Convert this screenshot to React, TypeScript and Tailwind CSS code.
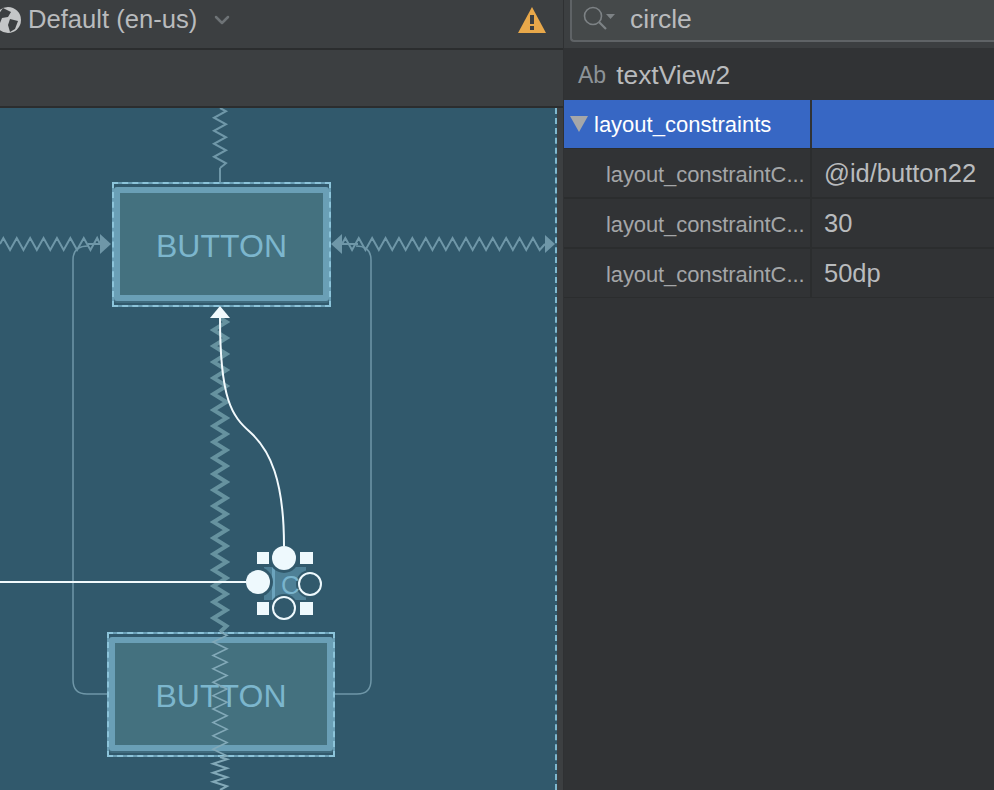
import { ChevronDown } from 'lucide-react';

const font = { fontFamily: '"Liberation Sans", Arial, sans-serif' };

// zigzag wire between two points on one axis
function zigV(x: number, y1: number, y2: number, step: number, amp: number) {
  let d = `M${x} ${y1}`;
  let side = 1;
  for (let y = y1 + step / 2; y < y2; y += step) {
    d += ` L${x + side * amp} ${y}`;
    side = -side;
  }
  return d + ` L${x} ${y2}`;
}

function zigH(y: number, x1: number, x2: number, step: number, amp: number) {
  let d = `M${x1} ${y}`;
  let side = -1;
  for (let x = x1 + step / 2; x < x2; x += step) {
    d += ` L${x} ${y + side * amp}`;
    side = -side;
  }
  return d + ` L${x2} ${y}`;
}

const rows = [
  { name: 'layout_constraintC...', value: '@id/button22' },
  { name: 'layout_constraintC...', value: '30' },
  { name: 'layout_constraintC...', value: '50dp' },
];

function CanvasButton({ className }: { className: string }) {
  return (
    <div className={`absolute border-2 border-dashed border-[#8cc4da] bg-[#6a9fb6] ${className}`}>
      <div className="h-full bg-[#31596c] pt-[3px]">
        <div className="h-[116px] rounded-[3px] bg-[#3f6b7e] pb-[2px]">
          <div className="flex h-[114px] items-center justify-center rounded-[3px] border-[6px] border-[#6a9fb6] bg-[#44717f] pt-[3px]">
            <span className="text-[32px] leading-none text-[#7cb6cd]">BUTTON</span>
          </div>
        </div>
      </div>
    </div>
  );
}

export default function App() {
  return (
    <div className="flex h-[790px] w-[994px] overflow-hidden bg-[#3c3f41]" style={font}>
      {/* Left: editor */}
      <div className="flex w-[564px] flex-col border-r border-[#2f3133]">
        <div className="flex h-[50px] shrink-0 items-center border-b-2 border-[#2b2d2e] pb-2">
          <svg width="28" height="28" viewBox="0 0 28 28" className="ml-[-6px] shrink-0">
            <circle cx="14" cy="14" r="13" fill="#c4c6c7" />
            <path d="M9 2 L17 6 L14 11 L8 12 L6 17 L1 13 Z M16 13 L24 15 L21 23 L16 26 L14 19 Z" fill="#3c3f41" />
          </svg>
          <span className="ml-[6px] text-[25.6px] leading-none text-[#b9bbbd]">Default (en-us)</span>
          <ChevronDown className="ml-[13px] text-[#6e7376]" size={24} strokeWidth={2.5} />
          <svg width="30" height="28" viewBox="0 0 30 28" className="ml-auto mr-[16px]">
            <path d="M15 1 L29 27 H1 Z" fill="#e8a84a" />
            <rect x="13" y="9" width="4" height="9" fill="#3c3f41" />
            <rect x="13" y="20" width="4" height="4" fill="#3c3f41" />
          </svg>
        </div>
        <div className="h-[58px] shrink-0 border-b-2 border-[#2b2d2e]" />

        {/* Design canvas */}
        <div className="relative mr-[6px] flex-1 overflow-hidden border-r-2 border-dashed border-[#7fb8cf] bg-[#31596c]">
          <CanvasButton className="left-[112px] top-[74px] h-[125px] w-[219px]" />
          <CanvasButton className="left-[107px] top-[524px] h-[125px] w-[228px]" />

          <svg className="absolute left-0 top-0" width="558" height="682" viewBox="0 108 558 682" fill="none">
            {/* chains */}
            <path d={zigV(220, 108, 168, 6.5, 6)} stroke="#6f97a8" strokeWidth="2" />
            <path d="M220 168 V182" stroke="#6f97a8" strokeWidth="2" />
            <path d={zigH(244, 0, 100, 6.7, 6)} stroke="#6f97a8" strokeWidth="2" />
            <path d={zigH(244, 342, 545, 6.7, 6)} stroke="#6f97a8" strokeWidth="2" />
            <path d={zigV(220, 318, 632, 8, 6.5)} stroke="#66929f" strokeWidth="4" />
            <path d={zigV(220, 632, 757, 6.7, 7)} stroke="#82a9b8" strokeWidth="1.6" />
            <path d={zigV(220, 757, 790, 4.5, 7)} stroke="#82a9b8" strokeWidth="2" />

            {/* chain arrows */}
            <path d="M100 234 L111 244 L100 254 Z" fill="#6f97a8" />
            <path d="M342 234 L331 244 L342 254 Z" fill="#6f97a8" />
            <path d="M545 235 L555 244 L545 253 Z" fill="#6f97a8" />
            <path d="M100 244 H88 M342 244 H358" stroke="#6f97a8" strokeWidth="2" />

            {/* group outline */}
            <path d="M88 246 Q73 246 73 260 V680 Q73 694 87 694 H107" stroke="#6f97a8" strokeWidth="1.5" />
            <path d="M356 246 Q371 246 371 260 V680 Q371 694 357 694 H335" stroke="#6f97a8" strokeWidth="1.5" />

            {/* selected view */}
            <rect x="264" y="567" width="42" height="33" fill="#4e8096" />
            <rect x="272" y="567" width="3" height="33" fill="#79b4cd" opacity="0.7" />
            <circle cx="284" cy="558" r="15" fill="#31596c" />
            <circle cx="258" cy="582" r="15" fill="#31596c" />
            <circle cx="310" cy="584" r="14" fill="#31596c" />
            <circle cx="284" cy="608" r="14" fill="#31596c" />
            <text x="281" y="594" fontSize="26" fill="#79b4cd">C</text>

            {/* connections */}
            <path d="M0 582 H246" stroke="#f2fafd" strokeWidth="2" />
            <path d="M284 546 C284 480 270 450 250 432 C232 416 220 400 220 318" stroke="#f2fafd" strokeWidth="2" />
            <path d="M220 306 L230 318 H210 Z" fill="#f2fafd" />

            {/* handles */}
            <rect x="257" y="552" width="12" height="12" fill="#eef9fd" />
            <rect x="300" y="552" width="13" height="12" fill="#eef9fd" />
            <rect x="257" y="602" width="12" height="13" fill="#eef9fd" />
            <rect x="300" y="602" width="13" height="13" fill="#eef9fd" />
            <circle cx="284" cy="558" r="12" fill="#eef9fd" />
            <circle cx="258" cy="582" r="12" fill="#eef9fd" />
            <circle cx="310" cy="584" r="11" stroke="#eef9fd" strokeWidth="2" />
            <circle cx="284" cy="608" r="11" stroke="#eef9fd" strokeWidth="2" />
          </svg>
        </div>
      </div>

      {/* Right: attributes */}
      <div className="flex flex-1 flex-col bg-[#313335]">
        <div className="h-[48px] shrink-0 bg-[#3c3f41] pl-[6px]">
          <div className="flex h-[42px] items-center rounded-bl-[4px] border-b-2 border-l-2 border-[#5f6366] bg-[#45494a] pb-[2px] pl-[10px]">
            <svg width="34" height="26" viewBox="0 0 34 26" fill="none" className="shrink-0">
              <circle cx="11" cy="10" r="8.5" stroke="#7d8285" strokeWidth="1.6" />
              <path d="M17 16 L24 23" stroke="#7d8285" strokeWidth="2.2" />
              <path d="M24 8 H33 L28.5 13 Z" fill="#7d8285" />
            </svg>
            <span className="ml-[14px] text-[26.5px] leading-none text-[#b9bbbd]">circle</span>
          </div>
        </div>
        <div className="flex h-[52px] shrink-0 items-center pl-[14px] pt-[2px]">
          <span className="text-[23px] leading-none text-[#8d9398]">Ab</span>
          <span className="ml-[10px] text-[26.4px] leading-none text-[#b9bbbd]">textView2</span>
        </div>
        <div className="flex h-[48px] shrink-0">
          <div className="flex w-[246px] items-center bg-[#3767c4] pl-[6px]">
            <svg width="18" height="16" viewBox="0 0 18 16" className="shrink-0">
              <path d="M0 0 H18 L9 16 Z" fill="#a5a7a9" />
            </svg>
            <span className="ml-[6px] pt-[2px] text-[22px] leading-none text-white">layout_constraints</span>
          </div>
          <div className="ml-[2px] flex-1 bg-[#3767c4]" />
        </div>
        {rows.map((r, i) => (
          <div key={i} className="flex h-[50px] shrink-0 border-y border-[#2b2d2e]">
            <div className="flex w-[246px] items-center overflow-hidden whitespace-nowrap pl-[42px] pt-[2px] text-[22px] tracking-[-0.1px] text-[#a4a6a8]">{r.name}</div>
            <div className="flex flex-1 items-center border-l-2 border-[#2b2d2e] pl-[12px] pt-[1px] text-[25.5px] text-[#b9bbbd]">{r.value}</div>
          </div>
        ))}
      </div>
    </div>
  );
}
